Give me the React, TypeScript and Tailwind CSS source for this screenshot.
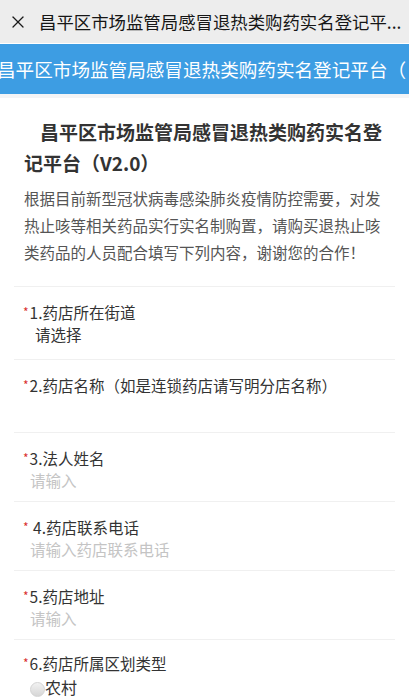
import { X } from "lucide-react";

const font = { fontFamily: '"Noto Sans CJK SC", "Noto Sans", sans-serif' };

type Field = {
  label: string;
  value?: string;
  placeholder?: string;
};

const fields: Field[] = [
  { label: "1.药店所在街道", value: "请选择" },
  { label: "2.药店名称（如是连锁药店请写明分店名称）" },
  { label: "3.法人姓名", placeholder: "请输入" },
  { label: " 4.药店联系电话", placeholder: "请输入药店联系电话" },
  { label: "5.药店地址", placeholder: "请输入" },
];

export default function App() {
  return (
    <div className="h-[700px] w-[409px] overflow-hidden bg-white" style={font}>
      {/* WeChat top bar */}
      <header className="flex h-[43px] items-center bg-[#ededed] pl-[8px]">
        <X className="h-[20px] w-[20px] shrink-0 text-[#1a1a1a]" strokeWidth={1.5} aria-hidden="true" />
        <p className="ml-[11px] whitespace-nowrap text-[17.4px] leading-[43px] text-[#161616]">
          昌平区市场监管局感冒退热类购药实名登记平...
        </p>
      </header>

      {/* Banner */}
      <div className="mt-px flex h-[50px] items-center overflow-hidden bg-[#3d9de3]">
        <span className="-ml-[3px] whitespace-nowrap text-[18.6px] leading-[50px] text-white">
          昌平区市场监管局感冒退热类购药实名登记平台（
        </span>
      </div>
      <div className="h-[4px] bg-[#f3f4f6]" />

      {/* Intro */}
      <section className="px-6 pt-[18px]">
        <h1 className="text-[19px] font-bold leading-[31px] text-[#333]">
          <span className="pl-[16px]">昌平区市场监管局感冒退热类购药实名登</span>
          <br />
          记平台（V2.0）
        </h1>
        <p className="mt-[7px] text-[15.5px] leading-[27px] text-[#555]">
          根据目前新型冠状病毒感染肺炎疫情防控需要，对发
          <br />
          热止咳等相关药品实行实名制购置，请购买退热止咳
          <br />
          类药品的人员配合填写下列内容，谢谢您的合作！
        </p>
      </section>

      {/* Form */}
      <div className="mx-[14px] mt-[20px]">
        {fields.map((f, i) => (
          <div
            key={f.label}
            className={`border-t border-[#f0f0f0] pt-[14px] ${i < 2 ? "pb-[13px]" : "pb-[9px]"}`}
          >
            <p className="flex pl-[9px] text-[15.5px] leading-[22px] text-[#333]">
              <span className="mr-px text-[12px] text-[#d9302e]">*</span>
              <span className="whitespace-pre">{f.label}</span>
            </p>
            <div className="h-[23px] text-[15.5px] leading-[23px]">
              {f.value && <span className="pl-[21px] text-[#333]">{f.value}</span>}
              {f.placeholder && <span className="pl-[16px] text-[#c4c4c4]">{f.placeholder}</span>}
            </div>
          </div>
        ))}
        <div className="border-t border-[#f0f0f0] pt-[12px]">
          <p className="flex pl-[9px] text-[15.5px] leading-[22px] text-[#333]">
            <span className="mr-px text-[12px] text-[#d9302e]">*</span>
            <span>6.药店所属区划类型</span>
          </p>
          <label className="mt-[1px] flex items-center pl-[16px] text-[16px] leading-[24px] text-[#333]">
            <span className="mt-[4px] h-[15px] w-[15px] rounded-full border border-[#d4d4d4] bg-gradient-to-b from-[#f2f2f2] to-[#d6d6d6]" />
            <span>农村</span>
          </label>
        </div>
      </div>
    </div>
  );
}
